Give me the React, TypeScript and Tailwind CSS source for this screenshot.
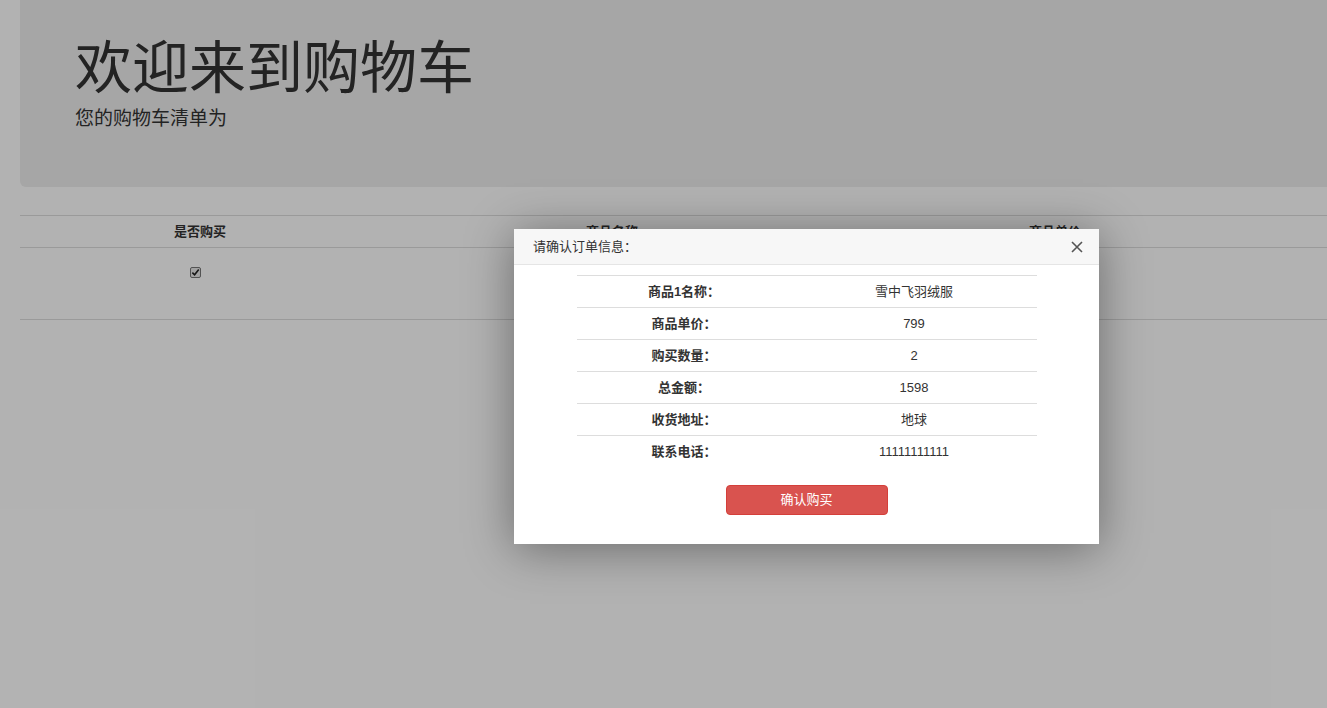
import React from "react";

const font = { fontFamily: '"Liberation Sans", "Noto Sans CJK SC", sans-serif' };

const rows: [string, string][] = [
  ["商品1名称：", "雪中飞羽绒服"],
  ["商品单价：", "799"],
  ["购买数量：", "2"],
  ["总金额：", "1598"],
  ["收货地址：", "地球"],
  ["联系电话：", "11111111111"],
];

const App = () => {
  return (
    <div
      className="relative h-[708px] w-full overflow-hidden bg-white text-[13px] text-[#333]"
      style={font}
    >
      {/* page under the overlay */}
      <div className="w-[1900px] pl-5">
        <div className="h-[187px] rounded-bl-md bg-[#eeeeee] pl-[55px] pt-[35px]">
          <h1 className="text-[57px] leading-[66px] font-normal">欢迎来到购物车</h1>
          <p className="mt-[6px] text-[19px] leading-[24px]">您的购物车清单为</p>
        </div>

        <table className="mt-[28px] w-full table-fixed border-collapse">
          <thead>
            <tr className="h-[32px] border-y border-[#dddddd]">
              <th className="w-[360px] text-center font-bold">是否购买</th>
              <th className="w-[464px] text-center font-bold">商品名称</th>
              <th className="w-[422px] text-center font-bold">商品单价</th>
              <th className="w-[330px]" />
              <th />
            </tr>
          </thead>
          <tbody>
            <tr className="h-[72px] border-b border-[#dddddd]">
              <td className="pr-[10px] pt-[19px] align-top">
                <div className="flex justify-center">
                  <span className="flex h-[11px] w-[11px] items-center justify-center rounded-[2px] border border-[#777] bg-[#e8e8e8]">
                    <svg width="9" height="9" viewBox="0 0 10 10">
                      <path d="M1.5 5.2 L4 7.6 L8.6 1.8" fill="none" stroke="#222" strokeWidth="1.8" />
                    </svg>
                  </span>
                </div>
              </td>
              <td />
              <td />
              <td />
              <td />
            </tr>
          </tbody>
        </table>
      </div>

      {/* overlay */}
      <div className="absolute inset-0 bg-black/30" />

      {/* modal */}
      <div className="absolute left-[514px] top-[229px] w-[585px] bg-white shadow-[0_5px_45px_rgba(0,0,0,0.4)]">
        <div className="flex h-[36px] items-center justify-between border-b border-[#e5e5e5] bg-[#f7f7f7] pl-[19px] pr-[16px]">
          <span className="text-[13px] text-[#333]">请确认订单信息：</span>
          <svg width="12" height="12" viewBox="0 0 12 12">
            <path d="M1 1 L11 11 M11 1 L1 11" stroke="#555" strokeWidth="1.6" />
          </svg>
        </div>
        <div className="flex flex-col items-center pb-[29px] pt-[10px]">
          <table className="w-[460px] border-collapse">
            <tbody>
              {rows.map(([k, v]) => (
                <tr key={k} className="h-[32px] border-t border-[#dddddd]">
                  <td className="w-[215px] text-center font-bold text-[#333]">{k}</td>
                  <td className="text-center text-[#333]">{v}</td>
                </tr>
              ))}
            </tbody>
          </table>
          <button className="mt-[17px] h-[30px] w-[162px] rounded-[4px] border border-[#d43f3a] bg-[#d9534f] text-[13px] text-white">
            确认购买
          </button>
        </div>
      </div>
    </div>
  );
};

export default App;
